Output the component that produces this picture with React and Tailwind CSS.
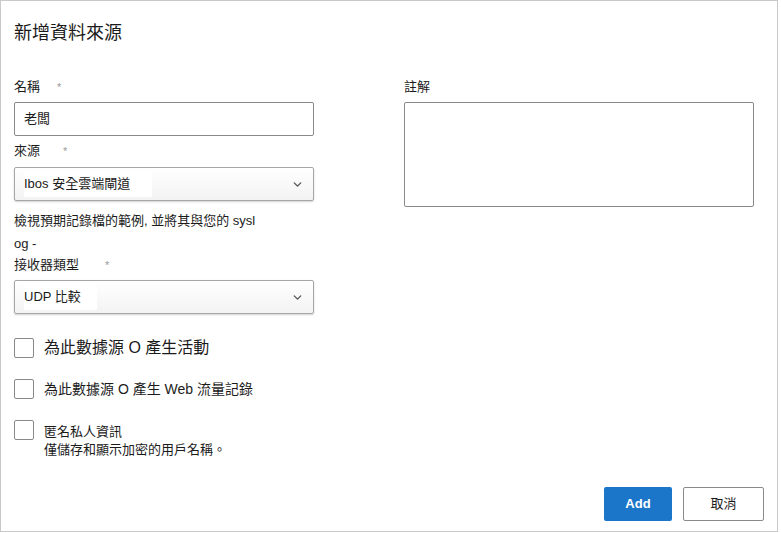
import React from 'react'
import { ChevronDown } from 'lucide-react'

const font = { fontFamily: '"Liberation Sans", Arial, "Noto Sans CJK TC", sans-serif' }

function Label({ text, starLeft }) {
  return (
    <div className="flex h-[20px] items-center text-[13px] leading-[20px] text-[#1b1b1b]">
      <span>{text}</span>
      <span className={`text-[11px] text-[#9a9a9a] ${starLeft}`}>*</span>
    </div>
  )
}

function Select({ value, mask }) {
  return (
    <div className="flex h-[34px] w-[300px] items-center justify-between rounded-[2px] border border-[#a6a6a6] bg-gradient-to-b from-white to-[#f3f3f3] pl-[9px] pr-[9px] shadow-[0_1px_2px_rgba(0,0,0,0.18)]">
      <span className={`bg-white py-[3px] text-[13px] text-[#1b1b1b] ${mask}`}>{value}</span>
      <ChevronDown size={13} strokeWidth={2.5} className="text-[#555]" />
    </div>
  )
}

function Check({ children, top }) {
  return (
    <div className={`flex items-start gap-[10px] ${top}`}>
      <div className="h-[20px] w-[20px] shrink-0 rounded-[2px] border border-[#8a8a8a] bg-white" />
      {children}
    </div>
  )
}

export default function App() {
  return (
    <div style={font} className="flex h-[532px] w-[778px] flex-col border border-[#c9c9c9] bg-white text-[#1b1b1b]">
      <h1 className="mt-[19px] pl-[13px] text-[18px] leading-[26px] font-normal">新增資料來源</h1>

      <div className="mt-[31px] flex pl-[13px]">
        {/* left column */}
        <div className="w-[300px]">
          <Label text="名稱" starLeft="ml-[17px]" />
          <div className="mt-[5px] flex h-[34px] items-center rounded-[2px] border border-[#8a8a8a] px-[9px] text-[13px]">老闆</div>

          <div className="mt-[5px]"><Label text="來源" starLeft="ml-[23px]" /></div>
          <div className="mt-[6px]"><Select value="Ibos 安全雲端閘道" mask="pr-[22px]" /></div>

          <p className="mt-[8px] text-[13px] leading-[23px]">
            檢視預期記錄檔的範例, 並將其與您的 sysl<br />og -
          </p>

          <Label text="接收器類型" starLeft="ml-[26px]" />
          <div className="mt-[5px]"><Select value="UDP 比較" mask="pr-[16px]" /></div>

          <Check top="mt-[24px]">
            <span className="text-[16px] leading-[20px]">為此數據源 O 產生活動</span>
          </Check>
          <Check top="mt-[21px]">
            <span className="text-[14px] leading-[20px]">為此數據源 O 產生 Web 流量記錄</span>
          </Check>
          <Check top="mt-[21px]">
            <span className="mt-[3px] text-[13px] leading-[18px]">
              匿名私人資訊<br />僅儲存和顯示加密的用戶名稱。
            </span>
          </Check>
        </div>

        {/* right column */}
        <div className="ml-[90px] w-[350px]">
          <div className="h-[20px] text-[13px] leading-[20px]">註解</div>
          <div className="mt-[5px] h-[105px] rounded-[2px] border border-[#8a8a8a] bg-white" />
        </div>
      </div>

      <div className="mt-auto mb-[10px] flex justify-end gap-[11px] pr-[13px]">
        <button className="h-[34px] w-[68px] rounded-[2px] bg-[#1b76c9] text-[13px] font-semibold text-white">Add</button>
        <button className="h-[34px] w-[81px] rounded-[2px] border border-[#8a8a8a] bg-white text-[13px] text-[#1b1b1b]">取消</button>
      </div>
    </div>
  )
}
